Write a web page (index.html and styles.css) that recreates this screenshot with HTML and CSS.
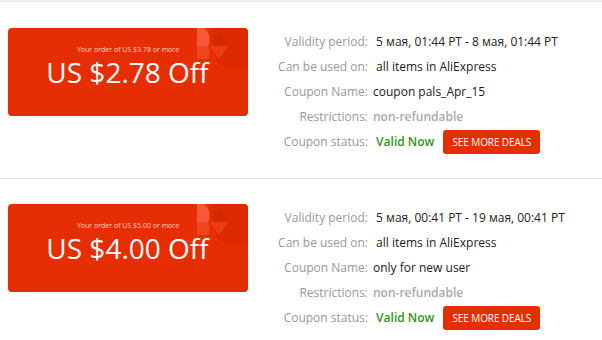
FILE: index.html
```html
<!DOCTYPE html>
<html>
<head>
<meta charset="utf-8">
<link rel="stylesheet" href="styles.css">
</head>
<body>
<div class="list">
  <div class="item">
    <div class="coupon">
      <svg class="deco" width="53" height="50" viewBox="0 0 53 50">
        <path d="M16 0 H53 V40 C42 46 30 42 22 34 Z" fill="#d62800" opacity="0.55"/>
        <path d="M2 0 H9 C15 4 16 13 13 18 H2 Z" fill="#f5583a"/>
        <path d="M2 18 H13 C16 23 15 28 12 31 H2 Z" fill="#ee4521"/>
        <path d="M24 3 Q25 11 32 13 Q25 15 24 24 Q23 15 16 13 Q23 11 24 3 Z" fill="#cf2500" opacity="0.8"/>
        <path d="M15 18 L33 18 L24 31 Z" fill="#eb3d14"/>
      </svg>
      <div class="cond">Your order of US $3.78 or more</div>
      <div class="amount">US $2.78 Off</div>
    </div>
    <div class="info">
      <div class="row"><span class="lab">Validity period:</span><span class="val">&nbsp;5 мая, 01:44 PT - 8 мая, 01:44 PT</span></div>
      <div class="row"><span class="lab">Can be used on:</span><span class="val">&nbsp;all items in AliExpress</span></div>
      <div class="row"><span class="lab">Coupon Name:</span><span class="val">coupon pals_Apr_15</span></div>
      <div class="row"><span class="lab">Restrictions:</span><span class="val muted">non-refundable</span></div>
      <div class="row"><span class="lab">Coupon status:</span><span class="val ok">&nbsp;Valid Now</span><a class="btn">SEE MORE DEALS</a></div>
    </div>
  </div>
  <div class="item">
    <div class="coupon">
      <svg class="deco" width="53" height="50" viewBox="0 0 53 50">
        <path d="M16 0 H53 V40 C42 46 30 42 22 34 Z" fill="#d62800" opacity="0.55"/>
        <path d="M2 0 H9 C15 4 16 13 13 18 H2 Z" fill="#f5583a"/>
        <path d="M2 18 H13 C16 23 15 28 12 31 H2 Z" fill="#ee4521"/>
        <path d="M24 3 Q25 11 32 13 Q25 15 24 24 Q23 15 16 13 Q23 11 24 3 Z" fill="#cf2500" opacity="0.8"/>
        <path d="M15 18 L33 18 L24 31 Z" fill="#eb3d14"/>
      </svg>
      <div class="cond">Your order of US $5.00 or more</div>
      <div class="amount">US $4.00 Off</div>
    </div>
    <div class="info">
      <div class="row"><span class="lab">Validity period:</span><span class="val">&nbsp;5 мая, 00:41 PT - 19 мая, 00:41 PT</span></div>
      <div class="row"><span class="lab">Can be used on:</span><span class="val">&nbsp;all items in AliExpress</span></div>
      <div class="row"><span class="lab">Coupon Name:</span><span class="val">only for new user</span></div>
      <div class="row"><span class="lab">Restrictions:</span><span class="val muted">non-refundable</span></div>
      <div class="row"><span class="lab">Coupon status:</span><span class="val ok">&nbsp;Valid Now</span><a class="btn">SEE MORE DEALS</a></div>
    </div>
  </div>
</div>
</body>
</html>
```
FILE: styles.css
```css
html, body { margin: 0; padding: 0; background: #fff; }
body { font-family: "Open Sans", "Noto Sans", sans-serif; color: #333; }
.list { border-top: 2px solid #eeeeee; }
.item {
  display: flex;
  align-items: flex-start;
  padding: 26px 0 24px 8px;
  border-bottom: 1px solid #e2e2e2;
}
.item + .item { border-bottom: none; padding-top: 25px; }
.coupon {
  position: relative;
  width: 240px;
  height: 88px;
  background: #e62e04;
  border-radius: 4px;
  overflow: hidden;
  color: #fff;
  text-align: center;
  box-sizing: border-box;
  padding-top: 17px;
  box-shadow: 0 1px 2px rgba(0,0,0,0.08);
}
.deco { position: absolute; right: 0; top: 0; }
.cond { position: relative; font-size: 7px; line-height: 9px; color: #fbd2c2; }
.amount { position: relative; font-size: 28px; line-height: 34px; margin-top: 1px; margin-left: -1px; }
.info { margin-left: 21px; padding-top: 1px; }
.row { display: flex; align-items: center; height: 25px; font-size: 12px; }
.lab { width: 99px; text-align: right; color: #999; margin-right: 5px; white-space: nowrap; }
.val { color: #222; white-space: nowrap; }
.muted { color: #aaa; font-weight: 600; }
.ok { color: #2f9622; font-weight: 600; }
.btn {
  margin-left: 9px;
  width: 97px;
  height: 24px;
  line-height: 24px;
  background: #e62e04;
  color: #fff;
  font-size: 10px;
  letter-spacing: -0.1px;
  text-align: center;
  border-radius: 3px;
  white-space: nowrap;
}
```
